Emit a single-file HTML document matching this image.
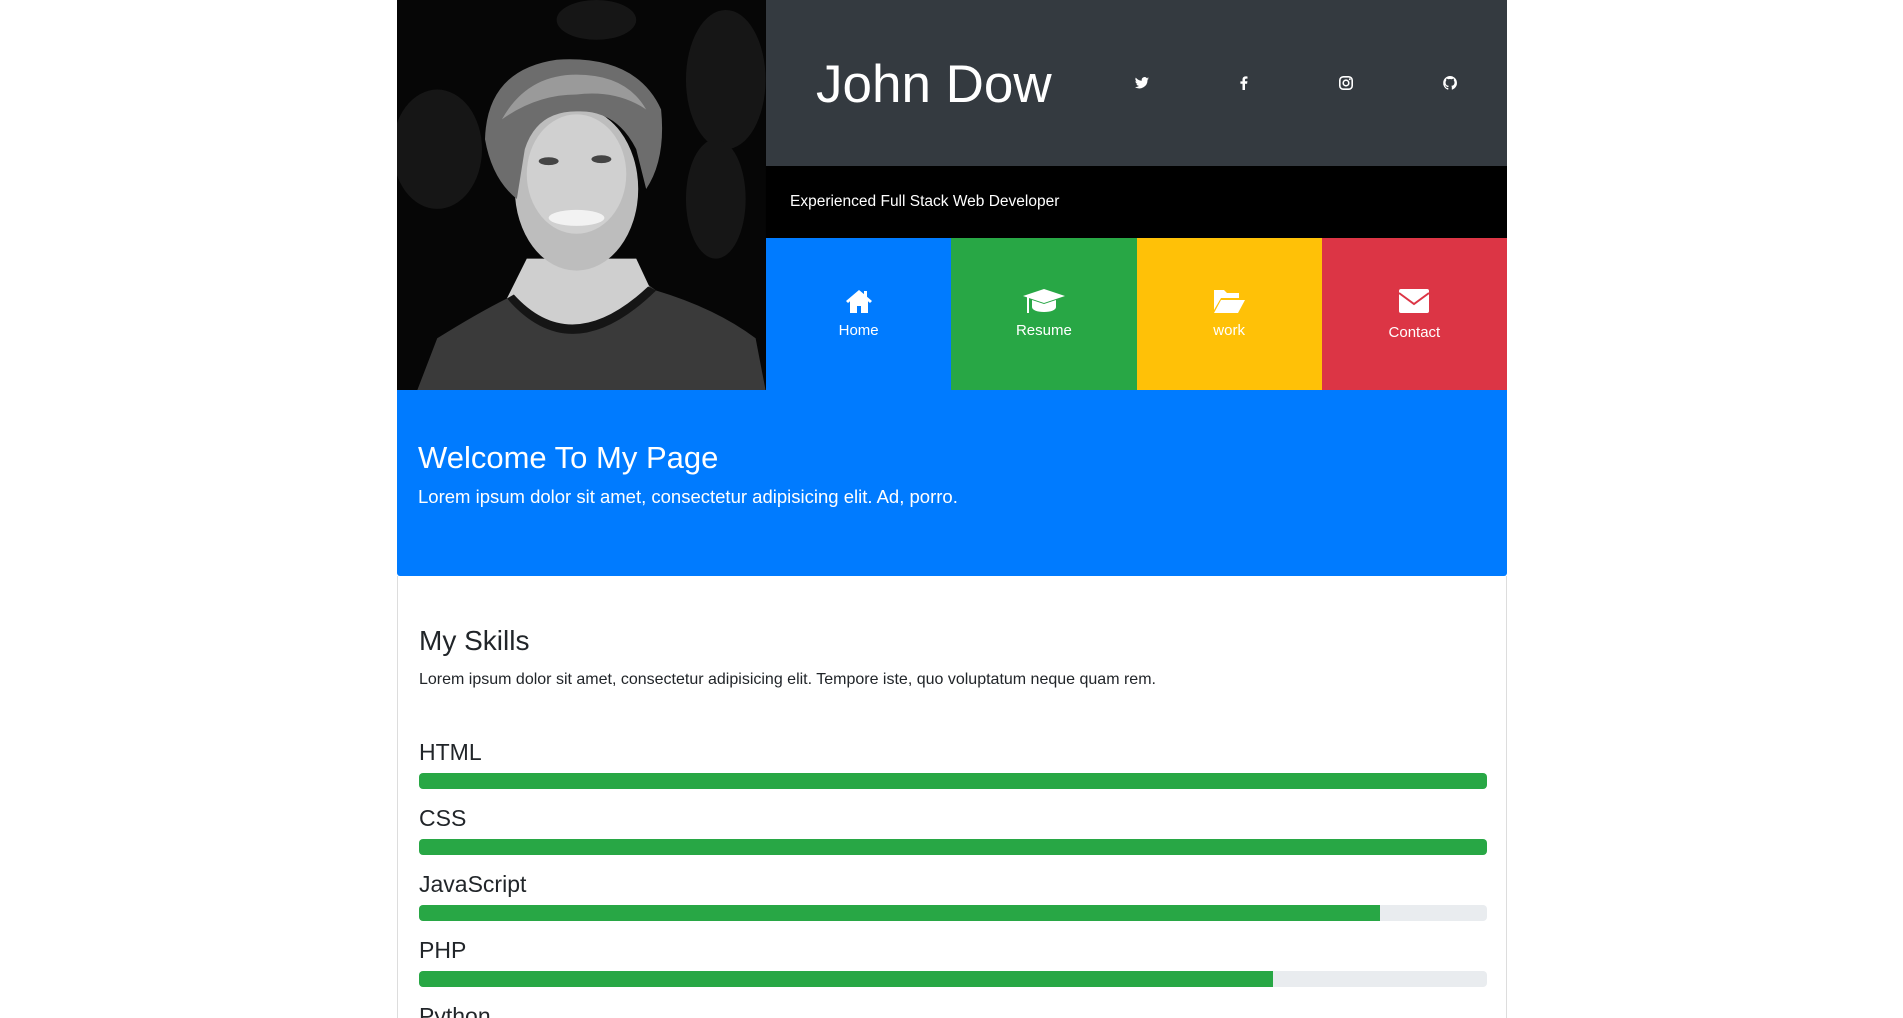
<!DOCTYPE html>
<html><head><meta charset="utf-8"><style>
*{box-sizing:border-box;margin:0;padding:0}
html{width:1903px;height:1018px;overflow:hidden}
body{width:1903px;height:1018px;overflow:hidden;background:#fff;font-family:"Liberation Sans",sans-serif;color:#212529;position:relative}
.wrap{position:absolute;left:397px;width:1110px;top:0;height:1018px;overflow:hidden}
.photo{position:absolute;left:0;top:0;width:369px;height:390px;background:#050505;overflow:hidden}
.dark{position:absolute;left:369px;top:0;width:741px;height:166px;background:#343a40}
.name{position:absolute;left:50px;top:54px;font-size:53px;line-height:normal;font-weight:300;color:#fff}
.ic{position:absolute;top:75px;width:16px;height:16px}
.band{position:absolute;left:369px;top:166px;width:741px;height:72px;background:#000;color:#fff;font-size:15.5px;padding:27px 0 0 24px}
.tile{position:absolute;top:238px;width:185.25px;height:152px;color:#fff;text-align:center;font-size:15px}
.tile svg{position:absolute;left:50%;top:50px;transform:translateX(-50%)}
.tile span{position:absolute;left:0;right:0;top:84px}
.welcome{position:absolute;left:0;top:390px;width:1110px;height:186px;background:#007bff;color:#fff;border-radius:0 0 3px 3px;padding:50px 0 0 21px}
.welcome h2{font-size:31px;font-weight:400;line-height:36px}
.welcome p{font-size:18.5px;line-height:22px;margin-top:10px}
.card{position:absolute;left:0;top:576px;width:1110px;height:442px;border:1px solid #ddd;border-top:none;border-bottom:none;overflow:hidden}
.card h3{position:absolute;left:21px;top:48px;font-size:28px;font-weight:400;line-height:34px}
.card .d{position:absolute;left:21px;top:95px;font-size:16px}
.sk{position:absolute;left:21px;width:1068px}
.sk h4{font-size:23px;font-weight:400;line-height:28px}
.bar{margin-top:7px;height:16px;background:#e9ecef;border-radius:4px;overflow:hidden}
.bar i{display:block;height:100%;background:#28a745}
</style></head><body>
<div class="wrap">
<div class="photo">
<svg width="369" height="390" viewBox="0 0 370 392">
<rect width="370" height="392" fill="#060606"/>
<g fill="#1a1a1a" opacity=".8"><ellipse cx="40" cy="150" rx="45" ry="60"/><ellipse cx="330" cy="80" rx="40" ry="70"/><ellipse cx="200" cy="20" rx="40" ry="20"/><ellipse cx="320" cy="200" rx="30" ry="60"/></g>
<path d="M20 392 L40 340 Q80 315 110 300 L140 270 L230 270 L260 292 Q320 310 360 340 L370 392Z" fill="#3a3a3a"/>
<path d="M110 300 Q175 370 255 292 L240 260 L130 260Z" fill="#cfcfcf"/>
<path d="M110 300 Q175 375 260 292 L252 288 Q175 360 117 296Z" fill="#151515"/>
<ellipse cx="180" cy="190" rx="62" ry="82" fill="#bdbdbd"/>
<ellipse cx="180" cy="175" rx="50" ry="60" fill="#d0d0d0"/>
<path d="M88 140 Q90 70 160 60 Q240 55 265 110 Q270 160 250 190 L240 150 Q220 110 180 112 Q140 112 128 150 L120 200 Q95 180 88 140Z" fill="#6d6d6d"/>
<path d="M105 120 Q130 75 180 75 Q230 75 250 110 Q220 90 180 95 Q140 95 105 120Z" fill="#9a9a9a"/>
<ellipse cx="180" cy="219" rx="28" ry="8" fill="#f2f2f2"/>
<ellipse cx="152" cy="162" rx="10" ry="4" fill="#444"/><ellipse cx="205" cy="160" rx="10" ry="4" fill="#444"/>
</svg>
</div>
<div class="dark">
<div class="name">John Dow</div>
<svg class="ic" style="left:368px" viewBox="0 0 16 16"><path fill="#fff" d="M15 3.5c-.5.2-1.1.4-1.7.5.6-.4 1-.9 1.3-1.6-.6.3-1.2.6-1.8.7A2.9 2.9 0 0 0 7.8 5.7 8.2 8.2 0 0 1 1.8 2.6a2.9 2.9 0 0 0 .9 3.9c-.5 0-.9-.2-1.3-.4 0 1.4 1 2.6 2.3 2.8-.4.1-.9.1-1.3 0 .4 1.2 1.4 2 2.7 2A5.8 5.8 0 0 1 .9 12.1 8.2 8.2 0 0 0 13.5 5.2v-.4c.6-.4 1.1-.9 1.5-1.3z"/></svg>
<svg class="ic" style="left:470px" viewBox="0 0 16 16"><path fill="#fff" d="M9 15V8.7h2.1l.3-2.4H9V4.8c0-.7.2-1.2 1.2-1.2h1.3V1.5c-.2 0-1-.1-1.9-.1-1.9 0-3.1 1.1-3.1 3.2v1.8H4.4v2.4h2.1V15z"/></svg>
<svg class="ic" style="left:572px" viewBox="0 0 16 16"><rect x="1.8" y="1.8" width="12.4" height="12.4" rx="3.5" fill="none" stroke="#fff" stroke-width="1.6"/><circle cx="8" cy="8" r="2.8" fill="none" stroke="#fff" stroke-width="1.6"/><circle cx="11.8" cy="4.2" r=".9" fill="#fff"/></svg>
<svg class="ic" style="left:676px" viewBox="0 0 16 16"><path fill="#fff" d="M8 1a7 7 0 0 0-2.2 13.6c.4.1.5-.2.5-.4v-1.3c-2 .4-2.4-.9-2.4-.9-.3-.8-.8-1-.8-1-.6-.4.1-.4.1-.4.7 0 1.1.7 1.1.7.6 1.1 1.7.8 2.1.6 0-.5.2-.8.4-1-1.6-.2-3.2-.8-3.2-3.5 0-.8.3-1.4.7-1.9 0-.2-.3-.9.1-1.9 0 0 .6-.2 1.9.7a6.6 6.6 0 0 1 3.5 0c1.3-.9 1.9-.7 1.9-.7.4 1 .1 1.7.1 1.9.4.5.7 1.1.7 1.9 0 2.7-1.6 3.3-3.2 3.5.3.2.5.7.5 1.3v2c0 .2.1.5.5.4A7 7 0 0 0 8 1z"/></svg>
</div>
<div class="band">Experienced Full Stack Web Developer</div>
<div class="tile" style="left:369px;background:#007bff"><svg width="28" height="26" viewBox="0 0 28 26"><path fill="#fff" d="M14 2 1 13l2 2 2-1.7V25h7v-7h4v7h7V13.3l2 1.7 2-2-5-4.3V3h-3v3.1z"/></svg><span>Home</span></div>
<div class="tile" style="left:554.25px;background:#28a745"><svg width="44" height="28" viewBox="0 0 44 28"><path fill="#fff" d="M22 1 1 8l21 7 21-7z"/><path fill="#fff" d="M10 12v7c0 3 5 5 12 5s12-2 12-5v-7l-12 4z"/><rect x="5" y="9" width="2" height="16" fill="#fff"/></svg><span>Resume</span></div>
<div class="tile" style="left:739.5px;background:#ffc107"><svg width="34" height="26" viewBox="0 0 34 26"><path fill="#fff" d="M2 2h10l3 3h12v5H9L2 22z"/><path fill="#fff" d="M9 12h24l-7 13H2z"/></svg><span>work</span></div>
<div class="tile" style="left:924.75px;background:#dc3545"><svg width="32" height="26" viewBox="0 0 32 26"><rect x="1" y="1" width="30" height="24" rx="2" fill="#fff"/><path d="M1 5l15 11L31 5" fill="none" stroke="#dc3545" stroke-width="2"/></svg><span style="top:86px">Contact</span></div>
<div class="welcome"><h2>Welcome To My Page</h2><p>Lorem ipsum dolor sit amet, consectetur adipisicing elit. Ad, porro.</p></div>
<div class="card">
<h3>My Skills</h3>
<div class="d">Lorem ipsum dolor sit amet, consectetur adipisicing elit. Tempore iste, quo voluptatum neque quam rem.</div>
<div class="sk" style="top:162px"><h4>HTML</h4><div class="bar"><i style="width:100%"></i></div></div>
<div class="sk" style="top:228px"><h4>CSS</h4><div class="bar"><i style="width:100%"></i></div></div>
<div class="sk" style="top:294px"><h4>JavaScript</h4><div class="bar"><i style="width:90%"></i></div></div>
<div class="sk" style="top:360px"><h4>PHP</h4><div class="bar"><i style="width:80%"></i></div></div>
<div class="sk" style="top:426px"><h4>Python</h4></div>
</div>
</div>
</body></html>
